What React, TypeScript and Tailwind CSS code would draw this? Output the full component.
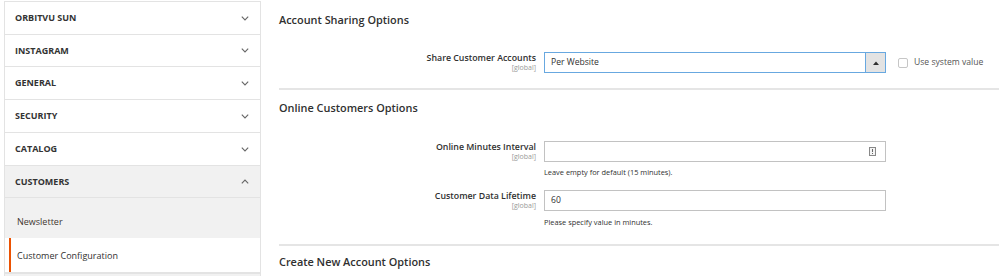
import React from "react";

const Chevron = ({ up }: { up?: boolean }) => (
  <svg width="8" height="5" viewBox="0 0 8 5" className="shrink-0">
    {up ? (
      <polyline points="0.8,4.3 4,1 7.2,4.3" fill="none" stroke="#666" strokeWidth="1.1" />
    ) : (
      <polyline points="0.8,0.7 4,4 7.2,0.7" fill="none" stroke="#666" strokeWidth="1.1" />
    )}
  </svg>
);

const NavTitle = ({
  title,
  up,
  active,
  h,
}: {
  title: string;
  up?: boolean;
  active?: boolean;
  h: string;
}) => (
  <div
    className={`${h} shrink-0 flex items-center justify-between pl-[10px] pr-[11px] border-b border-[#e3e3e3] ${
      active ? "bg-[#f1f1f1]" : "bg-white"
    }`}
  >
    <span className="text-[9px] font-bold text-[#333]">{title}</span>
    <Chevron up={up} />
  </div>
);

const Label = ({ text }: { text: string }) => (
  <div className="w-[257px] flex flex-col items-end">
    <span className="text-[8.8px] leading-[12px] font-semibold text-[#303030]">{text}</span>
    <span className="text-[7px] leading-[8px] text-[#999]">[global]</span>
  </div>
);

export default function App() {
  return (
    <div
      className="w-[999px] h-[276px] overflow-hidden bg-white flex"
      style={{ fontFamily: '"Open Sans", "Noto Sans", sans-serif' }}
    >
      {/* Sidebar */}
      <div className="ml-[4px] mt-[1px] w-[257px] shrink-0 flex flex-col border-l border-r border-t border-[#e3e3e3]">
        <NavTitle title="ORBITVU SUN" h="h-[33px]" />
        <NavTitle title="INSTAGRAM" h="h-[32px]" />
        <NavTitle title="GENERAL" h="h-[33px]" />
        <NavTitle title="SECURITY" h="h-[33px]" />
        <NavTitle title="CATALOG" h="h-[33px]" />
        <NavTitle title="CUSTOMERS" up active h="h-[32px]" />
        <div className="h-[40px] shrink-0 bg-[#f1f1f1] flex items-center pl-[12px] pt-[7px]">
          <span className="text-[9px] text-[#41362f]">Newsletter</span>
        </div>
        <div className="h-[36px] shrink-0 bg-white flex items-center border-b-2 border-[#e3e3e3]">
          <div className="ml-[4px] w-[2px] h-full bg-[#eb5202]" />
          <span className="ml-[6px] pt-[1px] text-[9px] text-[#303030]">Customer Configuration</span>
        </div>
        <div className="flex-1 bg-[#f1f1f1]" />
      </div>

      {/* Main */}
      <div className="ml-[18px] flex-1 flex flex-col">
        <div className="h-[40px] shrink-0 flex items-center text-[10.9px] font-semibold text-[#303030]">
          Account Sharing Options
        </div>
        <div className="mt-[12px] shrink-0 flex items-start">
          <Label text="Share Customer Accounts" />
          <div className="ml-[8px] w-[342px] h-[21px] border border-[#68a8e0] flex items-stretch">
            <div className="flex-1 flex items-center pl-[6px] text-[8.6px] text-[#303030]">Per Website</div>
            <div className="w-[20px] bg-[#e3e3e3] border-l border-[#68a8e0] flex items-center justify-center">
              <svg width="6" height="4" viewBox="0 0 6 4">
                <polygon points="0,4 3,0.5 6,4" fill="#303030" />
              </svg>
            </div>
          </div>
          <div className="ml-[12px] h-[21px] flex items-center">
            <div className="w-[10px] h-[10px] border border-[#c6c6c6] rounded-[2px] bg-white" />
            <span className="ml-[6px] text-[8.6px] text-[#555]">Use system value</span>
          </div>
        </div>
        <div className="mt-[15px] h-[2px] shrink-0 bg-[#e5e5e5]" />
        <div className="h-[36px] shrink-0 flex items-center text-[10.9px] font-semibold text-[#303030]">
          Online Customers Options
        </div>
        <div className="mt-[15px] shrink-0 flex items-start">
          <Label text="Online Minutes Interval" />
          <div className="ml-[8px] flex flex-col">
            <div className="w-[342px] h-[21px] border border-[#c2c2c2] flex items-center justify-end pr-[9px]">
              <svg width="7" height="9" viewBox="0 0 7 9">
                <rect x="0.5" y="0.5" width="6" height="8" fill="#f4f4f4" stroke="#888" strokeWidth="1" />
                <rect x="3" y="2" width="1" height="3" fill="#666" />
                <rect x="3" y="6" width="1" height="1" fill="#666" />
              </svg>
            </div>
            <div className="mt-[5px] h-[10px] leading-[10px] text-[7.4px] text-[#303030]">
              Leave empty for default (15 minutes).
            </div>
          </div>
        </div>
        <div className="mt-[13px] shrink-0 flex items-start">
          <Label text="Customer Data Lifetime" />
          <div className="ml-[8px] flex flex-col">
            <div className="w-[342px] h-[21px] border border-[#c2c2c2] flex items-center pl-[6px] text-[8.6px] text-[#303030]">
              60
            </div>
            <div className="mt-[6px] h-[10px] leading-[10px] text-[7.4px] text-[#303030]">
              Please specify value in minutes.
            </div>
          </div>
        </div>
        <div className="mt-[17px] h-[2px] shrink-0 bg-[#e5e5e5]" />
        <div className="h-[32px] shrink-0 flex items-center text-[10.9px] font-semibold text-[#303030]">
          Create New Account Options
        </div>
      </div>
    </div>
  );
}
